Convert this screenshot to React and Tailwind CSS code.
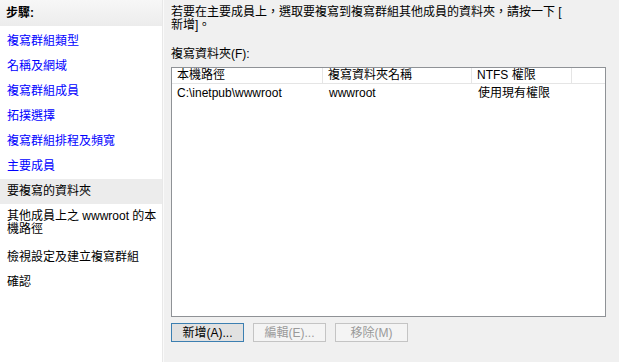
const font = {
  fontFamily: '"Liberation Sans", "Noto Sans CJK TC", sans-serif',
}

const steps = [
  { label: '複寫群組類型', link: true },
  { label: '名稱及網域', link: true },
  { label: '複寫群組成員', link: true },
  { label: '拓撲選擇', link: true },
  { label: '複寫群組排程及頻寬', link: true },
  { label: '主要成員', link: true },
  { label: '要複寫的資料夾', selected: true },
  { label: '其他成員上之 wwwroot 的本\n機路徑', tall: true },
  { label: '檢視設定及建立複寫群組' },
  { label: '確認' },
]

const columns = [
  { title: '本機路徑', width: 'w-[151px]' },
  { title: '複寫資料夾名稱', width: 'w-[149px]' },
  { title: 'NTFS 權限', width: 'w-[100px]' },
]

function StepList() {
  return (
    <aside className="flex w-[162px] shrink-0 flex-col bg-white">
      <div className="flex h-[26px] items-center bg-gradient-to-b from-[#f7f7f7] to-[#ececec] pl-[6px] text-[12px] font-bold text-black">
        步驟:
      </div>
      <div className="pt-[3px]">
        {steps.map((step) => (
          <div
            className={`whitespace-pre pl-[7px] pt-[6px] text-[12px] leading-[13px] ${
              step.tall ? 'pb-[9px]' : 'pb-[6px]'
            } ${step.selected ? 'bg-[#ececec]' : ''} ${
              step.link ? 'text-[#0000ff]' : 'text-black'
            }`}
            key={step.label}
          >
            {step.label}
          </div>
        ))}
      </div>
    </aside>
  )
}

function Button({ children, disabled, primary }) {
  return (
    <button
      className={`flex h-[19px] w-[73px] items-center justify-center border text-[12px] leading-none ${
        primary
          ? 'border-[#3c7fb1] bg-[#e1e1e1] text-black'
          : 'border-[#c4c4c4] bg-[#f4f4f4] text-[#9a9a9a]'
      }`}
      disabled={disabled}
      type="button"
    >
      {children}
    </button>
  )
}

function FolderList() {
  return (
    <div className="h-[250px] w-[435px] border border-[#8f9296] bg-white">
      <div className="flex h-[16px] border-b border-[#e5e5e5] text-[12px] leading-[15px] text-black">
        {columns.map((col) => (
          <div
            className={`${col.width} border-r border-[#e5e5e5] pl-[5px]`}
            key={col.title}
          >
            {col.title}
          </div>
        ))}
      </div>
      <div className="flex pt-[1px] text-[12px] leading-[17px] text-black">
        <div className="w-[151px] pl-[5px]">C:\inetpub\wwwroot</div>
        <div className="w-[149px] pl-[6px]">wwwroot</div>
        <div className="w-[100px] pl-[6px]">使用現有權限</div>
      </div>
    </div>
  )
}

export default function App() {
  return (
    <div className="flex h-[362px] w-[619px] bg-[#f0f0f0]" style={font}>
      <StepList />
      <div className="w-[1px] bg-[#e8e8e8]" />
      <div className="w-[1px] bg-[#fafafa]" />
      <main className="flex flex-1 flex-col pl-[7px] pt-[6px] text-black">
        <p className="text-[12px] leading-[13px]">
          若要在主要成員上，選取要複寫到複寫群組其他成員的資料夾，請按一下 [
          <br />
          新增]。
        </p>
        <p className="mt-[16px] text-[12px] leading-[13px]">複寫資料夾(F):</p>
        <div className="mt-[6px]">
          <FolderList />
        </div>
        <div className="mt-[6px] flex gap-[9px]">
          <Button primary>新增(A)...</Button>
          <Button disabled>編輯(E)...</Button>
          <Button disabled>移除(M)</Button>
        </div>
      </main>
    </div>
  )
}
